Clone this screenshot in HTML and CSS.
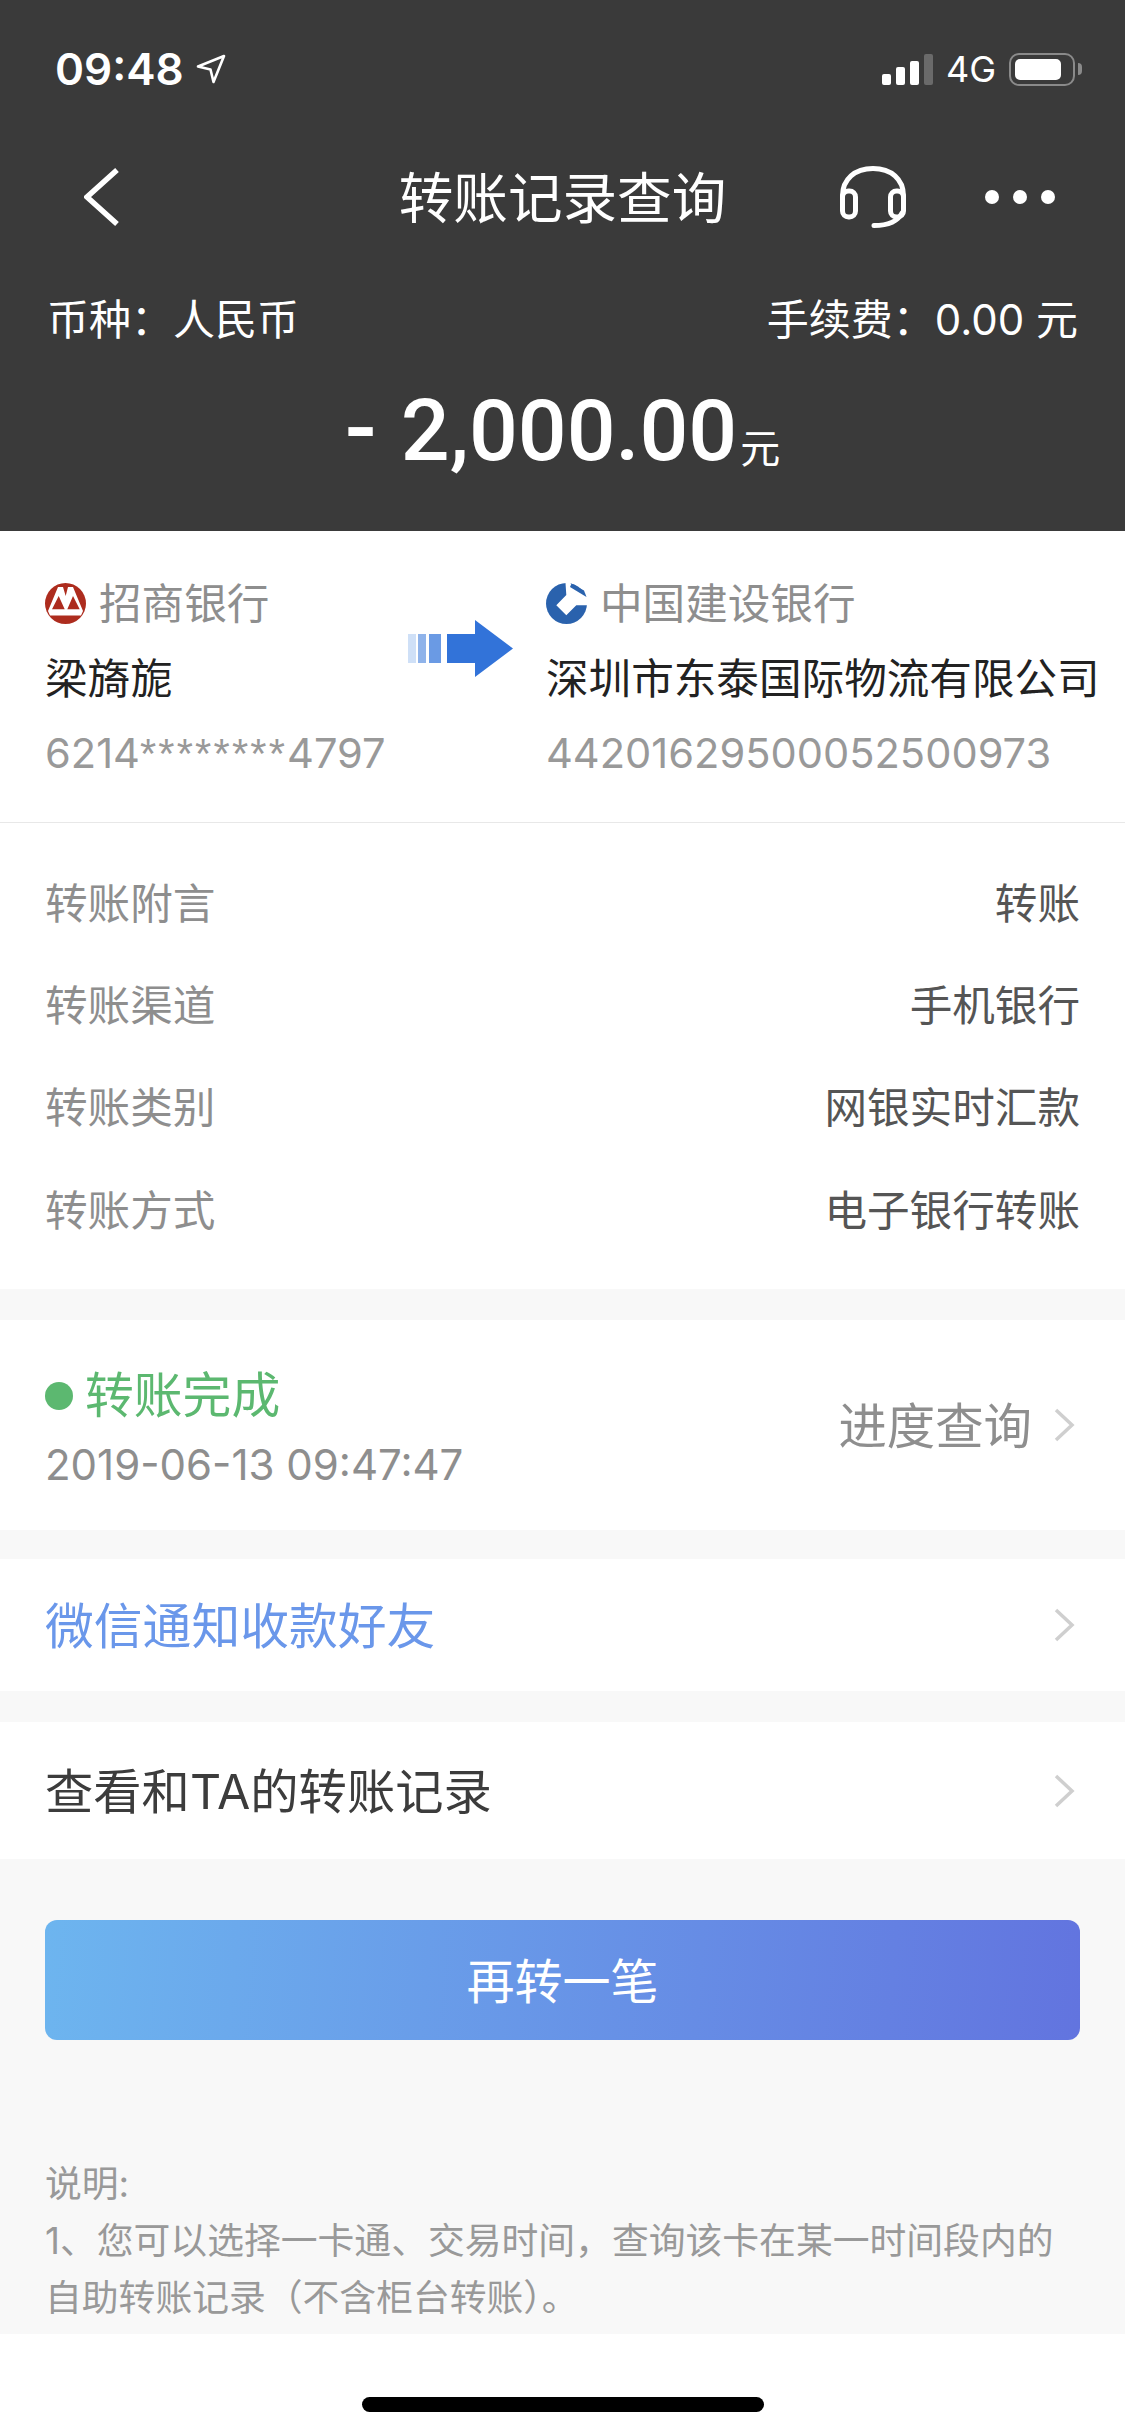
FILE: index.html
```html
<!DOCTYPE html>
<html lang="zh-CN">
<head>
    <meta charset="UTF-8">
    <meta name="viewport" content="width=device-width, initial-scale=1.0">
    <title>转账记录查询</title>
    <link rel="stylesheet" href="styles.css">
</head>
<body>
    <!-- Dark header -->
    <header class="header">
        <div class="status-bar">
            <div class="status-left">
                <span class="time">09:48</span>
                <svg class="location" width="30" height="30" viewBox="0 0 30 30"><path d="M2 12.5 28 2 17.5 28 14.5 15.5Z" fill="none" stroke="#fff" stroke-width="2.6" stroke-linejoin="round"/></svg>
            </div>
            <div class="status-right">
                <div class="signal">
                    <span class="bar bar-1"></span>
                    <span class="bar bar-2"></span>
                    <span class="bar bar-3"></span>
                    <span class="bar bar-4"></span>
                </div>
                <span class="network">4G</span>
                <div class="battery"><span class="battery-level"></span></div>
                <span class="battery-nub"></span>
            </div>
        </div>
        <nav class="nav">
            <svg class="back" width="36" height="60" viewBox="0 0 36 60"><path d="M33 3 3 30 33 57" fill="none" stroke="#fff" stroke-width="5.5"/></svg>
            <h1 class="nav-title">转账记录查询</h1>
            <svg class="headset" width="66" height="62" viewBox="0 0 66 62" fill="none" stroke="#fff" stroke-width="5" stroke-linecap="round">
                <rect x="2.5" y="25" width="13" height="26" rx="6"/>
                <rect x="50.5" y="25" width="13" height="26" rx="6"/>
                <path d="M2.5 33V30C2.5 13 15 2.5 33 2.5S63.5 13 63.5 30V33"/>
                <path d="M62 47C58 55 48 59.5 34 59.5"/>
            </svg>
            <div class="more"><span></span><span></span><span></span></div>
        </nav>
        <div class="fee-row">
            <span>币种：人民币</span>
            <span>手续费：0.00 元</span>
        </div>
        <div class="amount">
            <span class="amount-sign">-</span>
            <span class="amount-value">2,000.00</span>
            <span class="amount-unit">元</span>
        </div>
    </header>

    <!-- From / to accounts -->
    <section class="accounts">
        <div class="account account-from">
            <div class="bank">
                <svg class="bank-logo" width="41" height="41" viewBox="0 0 41 41">
                    <circle cx="20.5" cy="20.5" r="20.5" fill="#ad2c1e"/>
                    <path d="M3 28 13 4H18L20.7 13 23 4H28L38 28 36 32.5H5Z" fill="#fff"/>
                    <path d="M7 26.3 13.7 13 19.7 26.3ZM22.3 26.3 28 13 34.7 26.3Z" fill="#ad2c1e"/>
                </svg>
                <span>招商银行</span>
            </div>
            <div class="account-name">梁旖旎</div>
            <div class="account-no">6214<span class="mask">********</span>4797</div>
        </div>
        <svg class="transfer-arrow" width="105" height="57" viewBox="0 0 105 57">
            <rect x="0" y="14" width="8" height="29" fill="#cfe0f7"/>
            <rect x="10" y="14" width="8" height="29" fill="#8fb3ea"/>
            <rect x="21" y="14" width="12" height="29" fill="#6a9ae4"/>
            <path d="M39 14H67V0L105 28.5 67 57V43H39Z" fill="#3273d9"/>
        </svg>
        <div class="account account-to">
            <div class="bank">
                <svg class="bank-logo" width="41" height="41" viewBox="0 0 41 41">
                    <circle cx="20.5" cy="20.5" r="20.5" fill="#2a62ad"/>
                    <path d="M20.3 12 19.5 0H24L41 12V22.3H30.3L20.3 32.3 10.3 22.3Z" fill="#fff"/>
                    <path d="M25.5 0.5 38 7.5 40.5 14 24 4Z" fill="#2a62ad"/>
                </svg>
                <span>中国建设银行</span>
            </div>
            <div class="account-name">深圳市东泰国际物流有限公司</div>
            <div class="account-no">44201629500052500973</div>
        </div>
    </section>

    <!-- Transfer details -->
    <section class="details">
        <div class="detail-row"><span class="detail-label">转账附言</span><span class="detail-value">转账</span></div>
        <div class="detail-row"><span class="detail-label">转账渠道</span><span class="detail-value">手机银行</span></div>
        <div class="detail-row"><span class="detail-label">转账类别</span><span class="detail-value">网银实时汇款</span></div>
        <div class="detail-row"><span class="detail-label">转账方式</span><span class="detail-value">电子银行转账</span></div>
    </section>

    <!-- Status -->
    <section class="progress">
        <div class="progress-info">
            <div class="progress-state"><span class="state-dot"></span>转账完成</div>
            <div class="progress-time">2019-06-13 09:47:47</div>
        </div>
        <div class="progress-link">
            <span class="row-text">进度查询</span>
            <svg class="chevron" width="21" height="34" viewBox="0 0 21 34"><path d="M2 2 18 17 2 32" fill="none" stroke="#cfcfcf" stroke-width="3.5"/></svg>
        </div>
    </section>

    <a class="link-row link-wechat">
        <span class="row-text">微信通知收款好友</span>
        <svg class="chevron" width="21" height="34" viewBox="0 0 21 34"><path d="M2 2 18 17 2 32" fill="none" stroke="#cfcfcf" stroke-width="3.5"/></svg>
    </a>
    <a class="link-row link-history">
        <span class="row-text">查看和TA的转账记录</span>
        <svg class="chevron" width="21" height="34" viewBox="0 0 21 34"><path d="M2 2 18 17 2 32" fill="none" stroke="#cfcfcf" stroke-width="3.5"/></svg>
    </a>

    <button class="again-btn"><span class="row-text">再转一笔</span></button>

    <section class="notes">
        <p>说明:</p>
        <p>1、您可以选择一卡通、交易时间，查询该卡在某一时间段内的</p>
        <p>自助转账记录（不含柜台转账）。</p>
    </section>

    <!-- Home indicator -->
    <div class="home-area"><span class="home-bar"></span></div>
</body>
</html>
```

FILE: styles.css
```css
* {
    margin: 0;
    padding: 0;
    box-sizing: border-box;
}

body {
    width: 1125px;
    height: 2436px;
    overflow: hidden;
    display: flex;
    flex-direction: column;
    background: #f8f8f8;
    color: #222;
    font-family: Inter, "Noto Sans CJK SC", sans-serif;
    font-size: 42px;
}

/* Noto sits a little low in the line box */
.row-text {
    display: block;
    padding-bottom: 5px;
}

/* Header */
.header {
    height: 531px;
    background: #3a3a3a;
    color: #fff;
}

.status-bar {
    height: 138px;
    display: flex;
    justify-content: space-between;
    align-items: center;
    padding: 0 43px 0 55px;
}

.status-left,
.status-right {
    display: flex;
    align-items: center;
}

.time {
    font-size: 44px;
    font-weight: 600;
}

.location {
    margin-left: 12px;
}

.signal {
    display: flex;
    align-items: flex-end;
    gap: 5px;
    height: 31px;
}

.bar {
    width: 9px;
    background: #fff;
    border-radius: 2px;
}

.bar-1 { height: 11px; }
.bar-2 { height: 18px; }
.bar-3 { height: 24px; }
.bar-4 { height: 31px; background: #6a6a6a; }

.network {
    margin-left: 13px;
    font-size: 36px;
}

.battery {
    width: 66px;
    height: 33px;
    margin-left: 13px;
    padding: 4px;
    border: 2px solid #8a8a8a;
    border-radius: 10px;
}

.battery-level {
    display: block;
    width: 46px;
    height: 100%;
    background: #fff;
    border-radius: 5px;
}

.battery-nub {
    width: 4px;
    height: 12px;
    margin-left: 3px;
    background: #8a8a8a;
    border-radius: 0 4px 4px 0;
}

.nav {
    height: 118px;
    display: flex;
    align-items: center;
    position: relative;
    padding-left: 84px;
}

.nav-title {
    position: absolute;
    left: 0;
    right: 0;
    padding-bottom: 6px;
    text-align: center;
    font-size: 54.6px;
    font-weight: 400;
}

.headset {
    margin-left: auto;
}

.more {
    display: flex;
    gap: 14px;
    margin: 0 70px 0 79px;
}

.more span {
    width: 14px;
    height: 14px;
    background: #fff;
    border-radius: 50%;
}

.fee-row {
    display: flex;
    justify-content: space-between;
    margin-top: 34px;
    padding: 0 47px;
    line-height: 60px;
}

.amount {
    display: flex;
    align-items: baseline;
    justify-content: center;
    margin-top: 28px;
    line-height: 100px;
    font-family: Roboto, "Noto Sans CJK SC", sans-serif;
    font-weight: 500;
}

.amount-sign {
    margin-right: 24px;
    font-size: 94px;
}

.amount-value {
    font-size: 86px;
}

.amount-unit {
    margin-left: 3px;
    font-size: 40px;
    font-weight: 400;
    transform: translateY(3px);
}

/* Accounts */
.accounts {
    height: 292px;
    display: flex;
    padding: 35px 0 0 45px;
    background: #fff;
    border-bottom: 1px solid #e8e8e8;
    font-size: 42.6px;
}

.account {
    line-height: 75px;
}

.account-from {
    width: 363px;
}

.transfer-arrow {
    margin: 54px 33px 0 0;
    flex-shrink: 0;
}

.bank {
    display: flex;
    align-items: center;
    gap: 13px;
    color: #8e8e8e;
}

.account-name {
    color: #222;
}

.account-no {
    color: #999;
    font-size: 41.6px;
}

.mask {
    font-family: "Liberation Sans", sans-serif;
    letter-spacing: 2.2px;
}

/* Details */
.details {
    padding: 26px 45px 31px;
    background: #fff;
    font-size: 42.6px;
}

.detail-row {
    height: 102.3px;
    display: flex;
    justify-content: space-between;
    align-items: center;
}

.detail-label {
    color: #8e8e8e;
}

.detail-value {
    color: #555;
}

/* Status */
.progress {
    height: 210px;
    margin-top: 31px;
    display: flex;
    justify-content: space-between;
    align-items: center;
    padding: 0 50px 0 45px;
    background: #fff;
}

.progress-info {
    align-self: flex-start;
    padding-top: 46px;
}

.progress-state {
    display: flex;
    align-items: center;
    gap: 12px;
    color: #5cb870;
    font-size: 48.8px;
    line-height: 60px;
}

.state-dot {
    width: 28px;
    height: 28px;
    background: #5cb870;
    border-radius: 50%;
}

.progress-time {
    margin-top: 9px;
    color: #8e8e8e;
    line-height: 60px;
}

.progress-link {
    display: flex;
    align-items: center;
    gap: 22px;
    color: #8e8e8e;
    font-size: 48.4px;
}

.link-row {
    display: flex;
    justify-content: space-between;
    align-items: center;
    padding: 0 50px 0 45px;
    background: #fff;
    font-size: 48.8px;
}

.link-wechat {
    height: 132px;
    margin-top: 29px;
    color: #6a97ea;
}

.link-history {
    height: 137px;
    margin-top: 31px;
    color: #3c3c3c;
    font-size: 48.3px;
}

/* Main button */
.again-btn {
    height: 120px;
    margin: 61px 45px 0;
    border: none;
    border-radius: 12px;
    background: linear-gradient(95deg, #6db5ef 0%, #6274df 100%);
    color: #fff;
    font-family: inherit;
    font-size: 48px;
}

/* Notes */
.notes {
    flex: 1;
    margin-top: 115px;
    padding: 0 45px;
    color: #999;
    font-size: 36.8px;
    line-height: 57px;
}

.home-area {
    height: 102px;
    display: flex;
    align-items: flex-end;
    justify-content: center;
    padding-bottom: 24px;
    background: #fff;
}

.home-bar {
    width: 402px;
    height: 15px;
    background: #000;
    border-radius: 8px;
}
```
